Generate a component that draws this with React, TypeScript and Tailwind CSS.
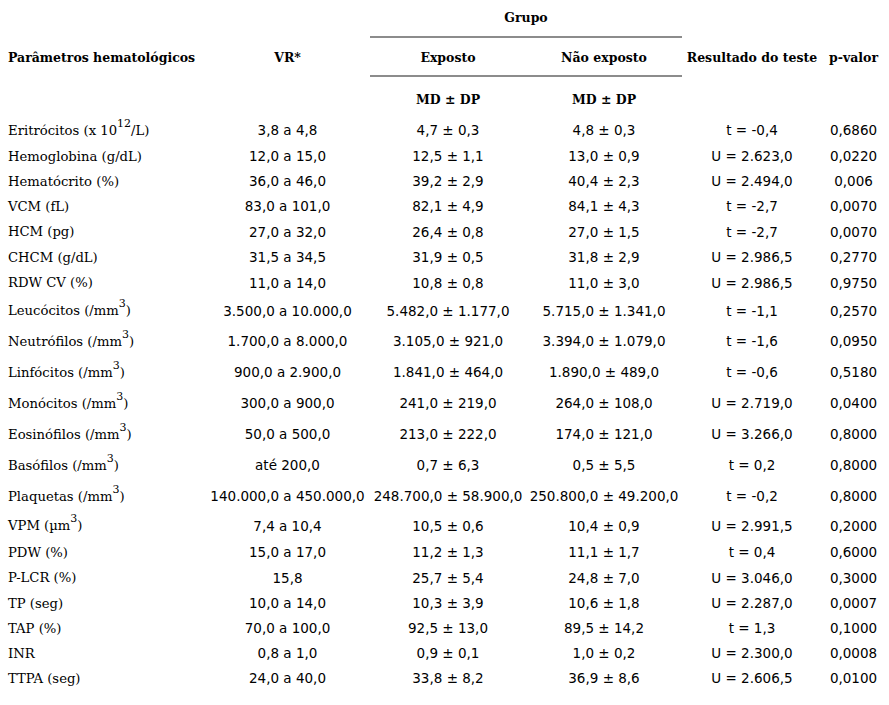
const rows: { label: React.ReactNode; vr: string; exp: string; nexp: string; test: string; p: string; h: string }[] = [
  { label: <>Eritrócitos (x 10<sup className="text-[11px] -top-2">12</sup>/L)</>, vr: '3,8 a 4,8', exp: '4,7 ± 0,3', nexp: '4,8 ± 0,3', test: 't = -0,4', p: '0,6860', h: 'h-[27px]' },
  { label: 'Hemoglobina (g/dL)', vr: '12,0 a 15,0', exp: '12,5 ± 1,1', nexp: '13,0 ± 0,9', test: 'U = 2.623,0', p: '0,0220', h: 'h-[25px]' },
  { label: 'Hematócrito (%)', vr: '36,0 a 46,0', exp: '39,2 ± 2,9', nexp: '40,4 ± 2,3', test: 'U = 2.494,0', p: '0,006', h: 'h-[25px]' },
  { label: 'VCM (fL)', vr: '83,0 a 101,0', exp: '82,1 ± 4,9', nexp: '84,1 ± 4,3', test: 't = -2,7', p: '0,0070', h: 'h-[25px]' },
  { label: 'HCM (pg)', vr: '27,0 a 32,0', exp: '26,4 ± 0,8', nexp: '27,0 ± 1,5', test: 't = -2,7', p: '0,0070', h: 'h-[26px]' },
  { label: 'CHCM (g/dL)', vr: '31,5 a 34,5', exp: '31,9 ± 0,5', nexp: '31,8 ± 2,9', test: 'U = 2.986,5', p: '0,2770', h: 'h-[25px]' },
  { label: 'RDW CV (%)', vr: '11,0 a 14,0', exp: '10,8 ± 0,8', nexp: '11,0 ± 3,0', test: 'U = 2.986,5', p: '0,9750', h: 'h-[26px]' },
  { label: <>Leucócitos (/mm<sup className="text-[11px] -top-2">3</sup>)</>, vr: '3.500,0 a 10.000,0', exp: '5.482,0 ± 1.177,0', nexp: '5.715,0 ± 1.341,0', test: 't = -1,1', p: '0,2570', h: 'h-[30px]' },
  { label: <>Neutrófilos (/mm<sup className="text-[11px] -top-2">3</sup>)</>, vr: '1.700,0 a 8.000,0', exp: '3.105,0 ± 921,0', nexp: '3.394,0 ± 1.079,0', test: 't = -1,6', p: '0,0950', h: 'h-[31px]' },
  { label: <>Linfócitos (/mm<sup className="text-[11px] -top-2">3</sup>)</>, vr: '900,0 a 2.900,0', exp: '1.841,0 ± 464,0', nexp: '1.890,0 ± 489,0', test: 't = -0,6', p: '0,5180', h: 'h-[31px]' },
  { label: <>Monócitos (/mm<sup className="text-[11px] -top-2">3</sup>)</>, vr: '300,0 a 900,0', exp: '241,0 ± 219,0', nexp: '264,0 ± 108,0', test: 'U = 2.719,0', p: '0,0400', h: 'h-[31px]' },
  { label: <>Eosinófilos (/mm<sup className="text-[11px] -top-2">3</sup>)</>, vr: '50,0 a 500,0', exp: '213,0 ± 222,0', nexp: '174,0 ± 121,0', test: 'U = 3.266,0', p: '0,8000', h: 'h-[31px]' },
  { label: <>Basófilos (/mm<sup className="text-[11px] -top-2">3</sup>)</>, vr: 'até 200,0', exp: '0,7 ± 6,3', nexp: '0,5 ± 5,5', test: 't = 0,2', p: '0,8000', h: 'h-[31px]' },
  { label: <>Plaquetas (/mm<sup className="text-[11px] -top-2">3</sup>)</>, vr: '140.000,0 a 450.000,0', exp: '248.700,0 ± 58.900,0', nexp: '250.800,0 ± 49.200,0', test: 't = -0,2', p: '0,8000', h: 'h-[31px]' },
  { label: <>VPM (µm<sup className="text-[11px] -top-2">3</sup>)</>, vr: '7,4 a 10,4', exp: '10,5 ± 0,6', nexp: '10,4 ± 0,9', test: 'U = 2.991,5', p: '0,2000', h: 'h-[28px]' },
  { label: 'PDW (%)', vr: '15,0 a 17,0', exp: '11,2 ± 1,3', nexp: '11,1 ± 1,7', test: 't = 0,4', p: '0,6000', h: 'h-[25px]' },
  { label: 'P-LCR (%)', vr: '15,8', exp: '25,7 ± 5,4', nexp: '24,8 ± 7,0', test: 'U = 3.046,0', p: '0,3000', h: 'h-[26px]' },
  { label: 'TP (seg)', vr: '10,0 a 14,0', exp: '10,3 ± 3,9', nexp: '10,6 ± 1,8', test: 'U = 2.287,0', p: '0,0007', h: 'h-[25px]' },
  { label: 'TAP (%)', vr: '70,0 a 100,0', exp: '92,5 ± 13,0', nexp: '89,5 ± 14,2', test: 't = 1,3', p: '0,1000', h: 'h-[25px]' },
  { label: 'INR', vr: '0,8 a 1,0', exp: '0,9 ± 0,1', nexp: '1,0 ± 0,2', test: 'U = 2.300,0', p: '0,0008', h: 'h-[25px]' },
  { label: 'TTPA (seg)', vr: '24,0 a 40,0', exp: '33,8 ± 8,2', nexp: '36,9 ± 8,6', test: 'U = 2.606,5', p: '0,0100', h: 'h-[25px]' },
]

const serif = "font-['DejaVu_Serif',serif]"
const sans = "font-['DejaVu_Sans',sans-serif]"

export default function App() {
  return (
    <div className="w-[889px] h-[705px] bg-white text-black overflow-hidden">
      <table className="table-fixed w-[889px] border-collapse">
        <colgroup>
          <col className="w-[205px]" />
          <col className="w-[165px]" />
          <col className="w-[156px]" />
          <col className="w-[156px]" />
          <col className="w-[140px]" />
          <col className="w-[67px]" />
        </colgroup>
        <thead className={`${serif} font-bold text-[12.5px]`}>
          <tr>
            <th className="h-[37px] p-0" />
            <th className="p-0" />
            <th colSpan={2} className="p-0 align-middle border-b-2 border-[#8c8c8c]">
              Grupo
            </th>
            <th className="p-0" />
            <th className="p-0" />
          </tr>
          <tr>
            <th className="h-[39px] p-0 pt-1 pl-2 text-left align-middle">Parâmetros hematológicos</th>
            <th className="p-0 pt-1 align-middle">VR*</th>
            <th className="p-0 pt-1 align-middle border-b-2 border-[#8c8c8c]">Exposto</th>
            <th className="p-0 pt-1 align-middle border-b-2 border-[#8c8c8c]">Não exposto</th>
            <th className="p-0 pt-1 align-middle whitespace-nowrap">Resultado do teste</th>
            <th className="p-0 pt-1 pr-1 align-middle whitespace-nowrap">p-valor</th>
          </tr>
          <tr>
            <th className="h-[41px] p-0 pt-[6px]" />
            <th className="p-0 pt-[6px]" />
            <th className="p-0 pt-[6px] align-middle">MD ± DP</th>
            <th className="p-0 pt-[6px] align-middle">MD ± DP</th>
            <th className="p-0 pt-[6px]" />
            <th className="p-0 pt-[6px]" />
          </tr>
        </thead>
        <tbody className="text-[13.5px]">
          {rows.map((r, i) => (
            <tr key={i}>
              <td className={`${r.h} ${serif} text-[13.2px] p-0 pl-2 align-middle whitespace-nowrap`}>{r.label}</td>
              <td className={`${sans} p-0 text-center align-middle whitespace-nowrap`}>{r.vr}</td>
              <td className={`${sans} p-0 text-center align-middle whitespace-nowrap`}>{r.exp}</td>
              <td className={`${sans} p-0 text-center align-middle whitespace-nowrap`}>{r.nexp}</td>
              <td className={`${sans} p-0 text-center align-middle whitespace-nowrap`}>{r.test}</td>
              <td className={`${sans} p-0 pr-1 text-center align-middle whitespace-nowrap`}>{r.p}</td>
            </tr>
          ))}
        </tbody>
      </table>
    </div>
  )
}
